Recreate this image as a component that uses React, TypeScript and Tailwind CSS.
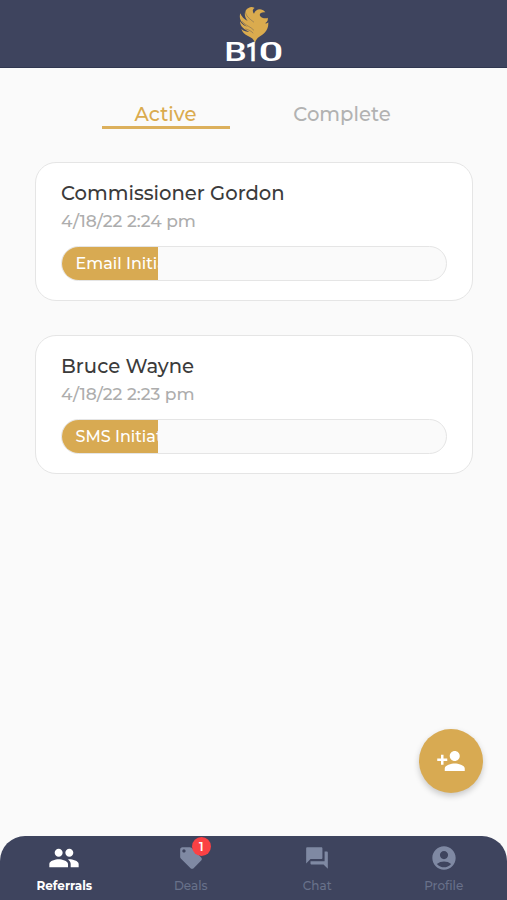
import type { ReactNode } from "react"
import { MdAccountCircle, MdLocalOffer, MdPeople, MdPersonAdd, MdQuestionAnswer } from "react-icons/md"
import { clsx } from "clsx"

interface Referral {
  name: string
  date: string
  status: string
  progress: number
}

const referrals: Referral[] = [
  { name: "Commissioner Gordon", date: "4/18/22 2:24 pm", status: "Email Initiated", progress: 25 },
  { name: "Bruce Wayne", date: "4/18/22 2:23 pm", status: "SMS Initiated", progress: 25 },
]

function Logo() {
  return (
    <svg width="90" height="68" viewBox="0 0 90 68">
      {/* Phoenix */}
      <g transform="scale(0.3333)">
        <path
          d="M117 23C121 20 128 20 134 24C128 27 126 34 132 41C136 29 153 21 166 37C155 35 147 41 150 47C154 55 169 57 173 53C175 61 171 67 165 70C170 71 173 70 175 67C176 94 160 103 148 110C140 115 138 120 135 129C132 118 124 112 114 108C104 104 98 98 94 87C102 94 110 95 118 96C104 89 90 81 90 64C97 74 106 79 115 82C97 71 85 59 91 40C94 50 103 58 113 63C100 48 102 28 117 23Z"
          fill="#daab4e"
        />
        <path
          d="M106 32C105 48 120 57 131 66M97 65C109 78 122 80 131 90M107 87C117 90 124 93 129 99"
          fill="none"
          stroke="#3e445e"
          strokeOpacity="0.45"
          strokeWidth="2.5"
          strokeLinecap="round"
        />
      </g>
      <g fill="#fff" fontFamily="Roboto, sans-serif" fontWeight="500" fontSize="25.5">
        <text transform="translate(14.2 61.4) scale(1.4 1)">B</text>
        <text transform="translate(35.7 61.4) scale(0.9 1)" stroke="#fff" strokeWidth="0.6">1</text>
        <text transform="translate(48.4 61.4) scale(1.72 1)">0</text>
      </g>
    </svg>
  )
}

function ReferralCard({ name, date, status, progress }: Referral) {
  return (
    <div className="h-[139px] rounded-[21px] border-[1.5px] border-[#e5e5e5] bg-white px-[25px] pt-[18px]">
      <h2 className="h-6 text-[19.6px] leading-6 font-medium text-[#3b3b3b]">{name}</h2>
      <p className="mt-1 h-6 text-[17.1px] leading-6 font-medium text-[#adadad]">{date}</p>
      <div className="mt-[13px] h-[35px] overflow-hidden rounded-full border-[1.5px] border-[#e5e5e5] bg-[#fafafa]">
        <div
          className="h-full overflow-hidden bg-[#d8aa52] pl-[13.5px] text-[16px] leading-[34px] font-medium whitespace-nowrap text-white"
          style={{ width: `${progress}%` }}
        >
          {status}
        </div>
      </div>
    </div>
  )
}

interface NavItemProps {
  label: string
  icon: ReactNode
  active?: boolean
  badge?: number
}

function NavItem({ label, icon, active, badge }: NavItemProps) {
  return (
    <button className={clsx("flex flex-1 flex-col items-center", active ? "font-bold text-white" : "font-medium text-[#68718a]")}>
      <span className={clsx("relative flex h-8 items-center", !active && "text-[#7f89a3]")}>
        {icon}
        {badge && (
          <span className="absolute -top-[5px] left-[14px] flex size-[19px] items-center justify-center rounded-full bg-[#fb4144] text-[12px] font-semibold text-white">
            {badge}
          </span>
        )}
      </span>
      <span className="mt-1 text-[12px] leading-4">{label}</span>
    </button>
  )
}

export default function App() {
  return (
    <div className="flex h-[900px] w-[507px] flex-col bg-[#fafafa] font-[Montserrat,Inter,sans-serif]">
      <header className="flex h-[68px] justify-center border-b border-[#303750] bg-[#3e445e] pl-[3px]">
        <Logo />
      </header>

      <div className="flex justify-center gap-12 pt-[30px]">
        <button className="h-[31px] w-32 border-b-[3px] border-[#dcb05c] pt-px text-[19.6px] leading-[30px] font-medium text-[#daab4e]">Active</button>
        <button className="h-[31px] w-32 pt-px pb-0.5 pl-px text-[19.6px] leading-[30px] font-medium text-[#b2b2b2]">Complete</button>
      </div>

      <main className="flex flex-1 flex-col gap-[34.4px] pt-[33px] pr-[34px] pl-[35px]">
        {referrals.map((referral) => (
          <ReferralCard key={referral.name} {...referral} />
        ))}
      </main>

      <button className="mr-6 mb-[43px] flex size-16 items-center justify-center self-end rounded-full bg-[#d8aa52] pr-px text-white shadow-[0_3px_6px_rgba(0,0,0,0.2)]">
        <MdPersonAdd size={30} />
      </button>

      <nav className="flex h-16 rounded-t-[25px] bg-[#3e445e] pt-1.5 pl-px">
        <NavItem label="Referrals" icon={<MdPeople size={32} />} active />
        <NavItem label="Deals" icon={<MdLocalOffer size={26} />} badge={1} />
        <NavItem label="Chat" icon={<MdQuestionAnswer size={26} />} />
        <NavItem label="Profile" icon={<MdAccountCircle size={28} />} />
      </nav>
    </div>
  )
}
